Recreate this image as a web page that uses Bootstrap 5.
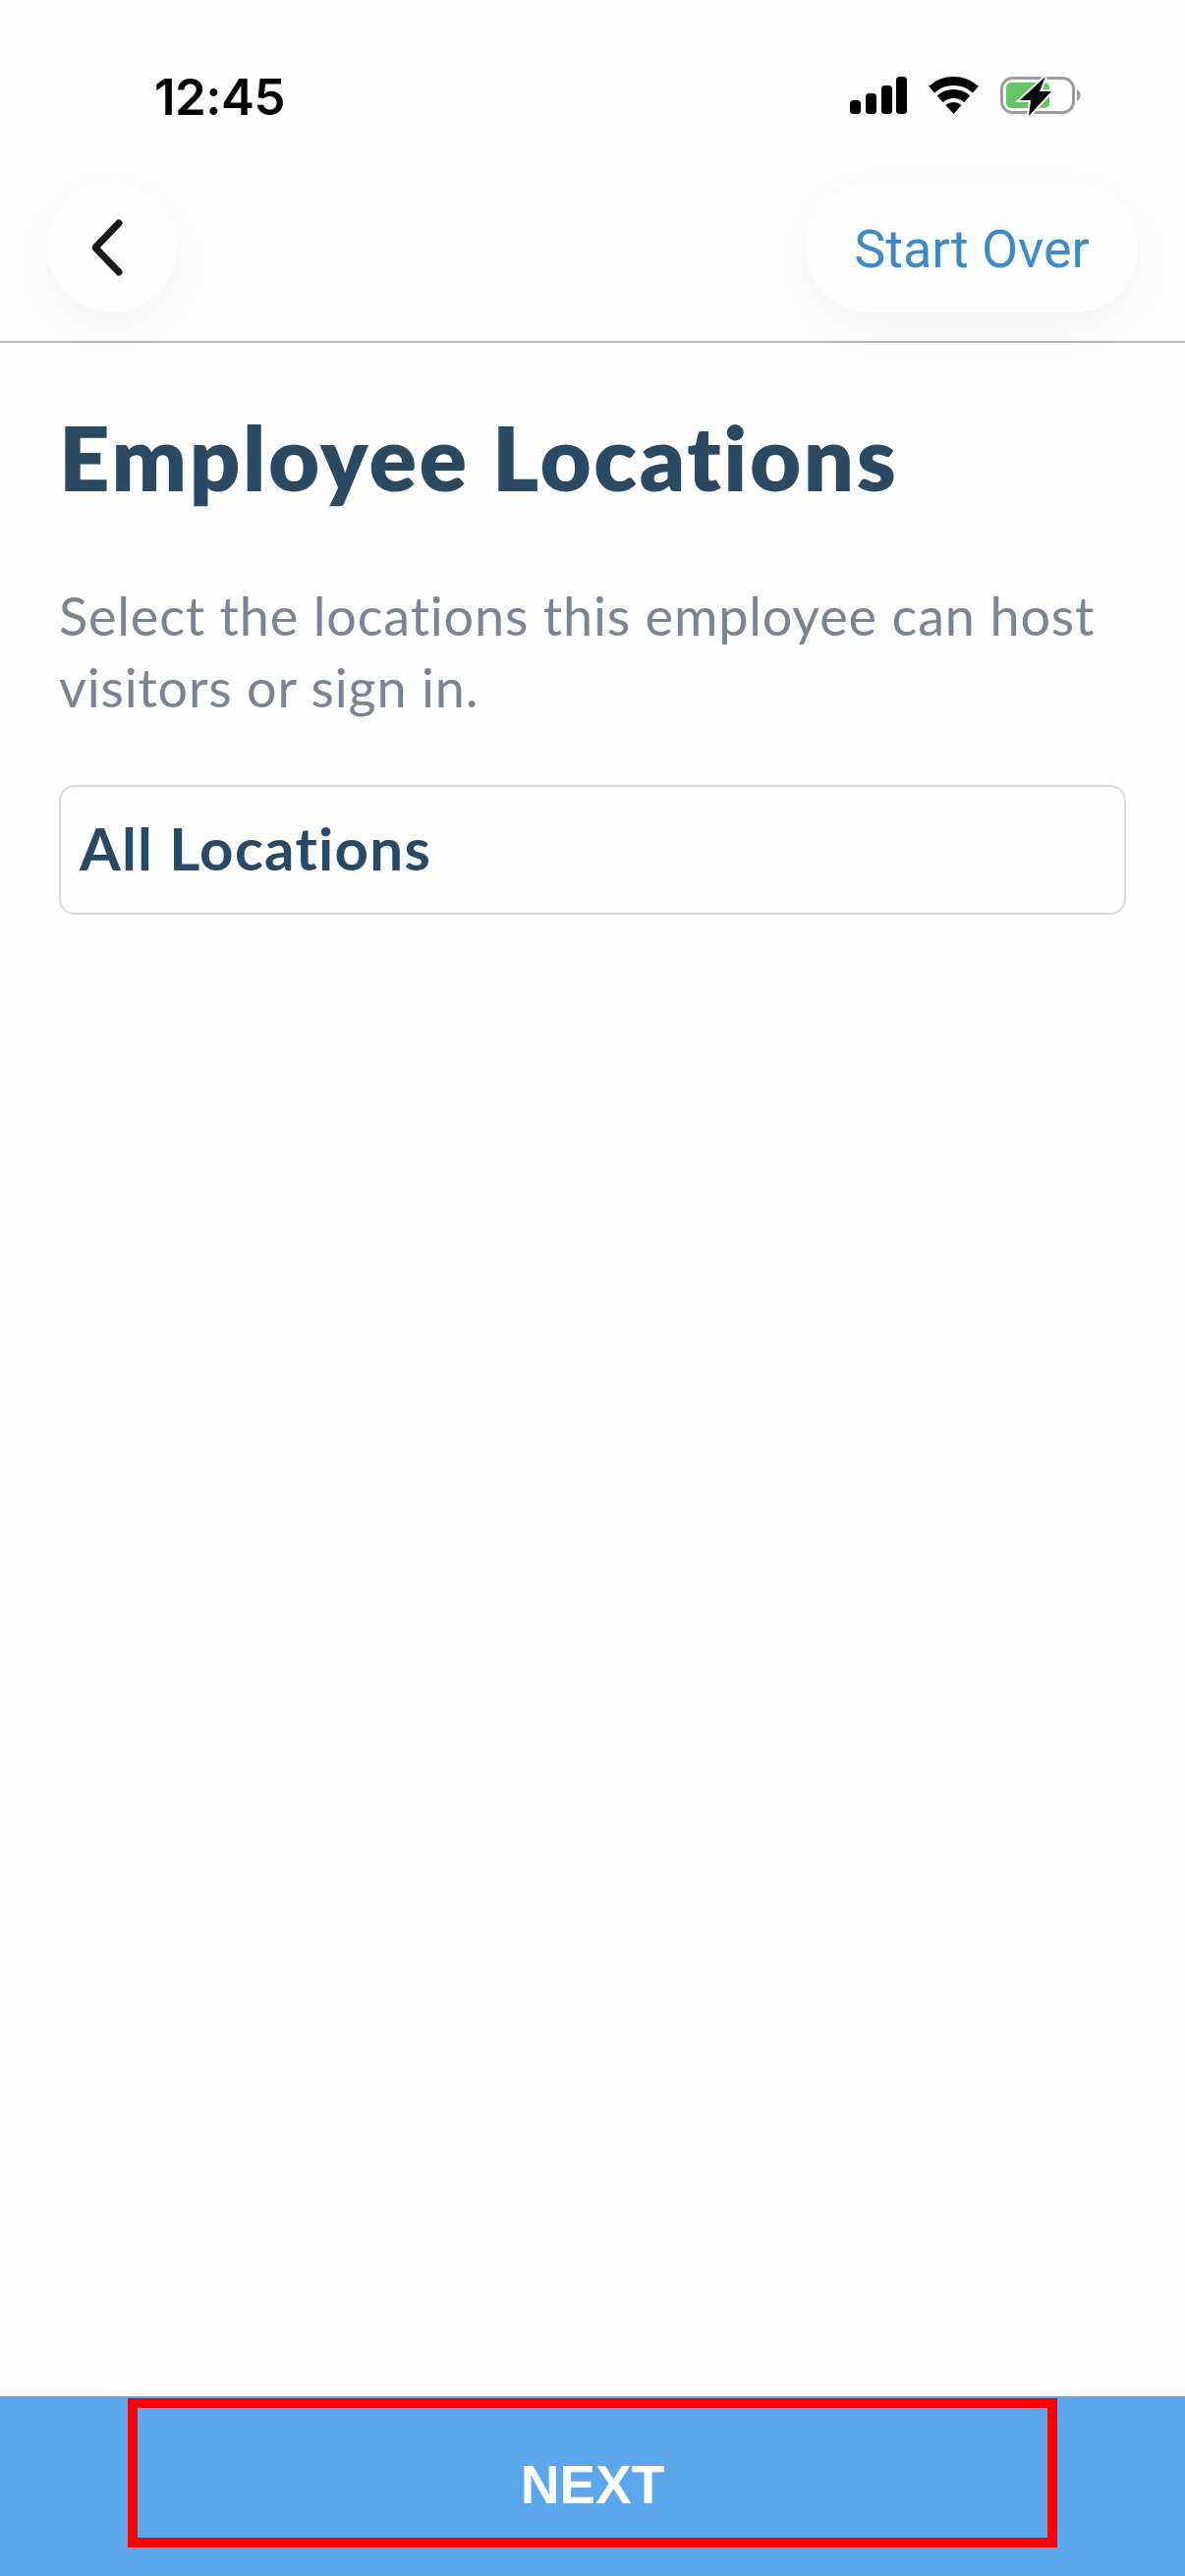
<!DOCTYPE html>
<html lang="en">
<head>
  <meta charset="UTF-8" />
  <meta name="viewport" content="width=device-width, initial-scale=1.0"/>
  <title>Employee Locations</title>

  <link href="https://cdn.jsdelivr.net/npm/bootstrap@5.3.0/dist/css/bootstrap.min.css" rel="stylesheet"/>

  <style>
    body {
      background-color: #fefefe;
      font-family: 'Lato', 'Liberation Sans', sans-serif;
      font-variant-ligatures: none;
      height: 2622px;
    }

    .status-row {
      height: 186px;
      padding: 70px 106px 0 157px;
      align-items: flex-start;
    }

    .status-icons {
      gap: 22px;
    }

    .clock {
      font-family: 'Inter', sans-serif;
      font-weight: 600;
      font-size: 51px;
      line-height: 58px;
      color: #000;
      letter-spacing: -0.5px;
    }

    .top-row {
      height: 163px;
      padding: 0 48px 30px;
      border-bottom: 2px solid #b9b9b9;
    }

    .round-btn {
      height: 132px;
      background-color: #fefefe;
      border: 0;
      border-radius: 66px;
      box-shadow: 0 16px 60px rgba(0, 0, 0, 0.05);
    }

    .back-btn {
      width: 132px;
    }

    .over-btn {
      width: 338px;
      padding: 4px 0 0;
      color: #3e8ac6;
      font-family: 'Roboto', sans-serif;
      font-size: 54px;
    }

    .page-title {
      color: #2a4a63;
      font-weight: 800;
      font-size: 90px;
      line-height: 100px;
      letter-spacing: 2.6px;
      margin: 66px 0 0;
    }

    .page-body {
      padding: 0 60px;
    }

    .page-hint {
      color: #7c8493;
      font-size: 54px;
      line-height: 73px;
      letter-spacing: 0.82px;
      margin: 75px 0 0;
    }

    .loc-box {
      height: 132px;
      margin-top: 63px;
      padding: 0 19px 4px;
      color: #2a4a63;
      font-size: 60px;
      font-weight: 700;
      letter-spacing: 1.3px;
      border: 2px solid #d9d9d9;
      border-radius: 16px;
    }

    .next-bar {
      height: 183px;
      background-color: #5ca7ec;
      padding-top: 2px;
    }

    .next-btn {
      width: 946px;
      height: 152px;
      padding: 25px 0 0;
      background-color: transparent;
      color: #fff;
      font-family: 'Liberation Sans', sans-serif;
      font-size: 55px;
      font-weight: 700;
      border: 10px solid #ff0000;
      border-radius: 0;
    }
  </style>
</head>
<body class="d-flex flex-column">

  <div class="status-row d-flex justify-content-between">
    <div class="clock">12:45</div>
    <div class="d-flex status-icons">
      <svg width="58" height="38" viewBox="0 0 58 38" class="mt-2">
        <rect x="0" y="24" width="11" height="14" rx="3.5" fill="#000"/>
        <rect x="16" y="17" width="11" height="21" rx="3.5" fill="#000"/>
        <rect x="32" y="9" width="11" height="29" rx="3.5" fill="#000"/>
        <rect x="47" y="0" width="11" height="38" rx="3.5" fill="#000"/>
      </svg>
      <svg width="51" height="38" viewBox="0 0 51 38" class="mt-2">
        <path d="M3.1 13.1A33.5 33.5 0 0 1 47.9 13.1" fill="none" stroke="#000" stroke-width="9"/>
        <path d="M11.8 22.8A20.5 20.5 0 0 1 39.2 22.8" fill="none" stroke="#000" stroke-width="9"/>
        <path d="M17.5 29.1A12 12 0 0 1 33.5 29.1L25.5 38Z" fill="#000"/>
      </svg>
      <svg width="82" height="40" viewBox="0 0 82 40" class="mt-2">
        <rect x="1.5" y="1.5" width="73" height="35" rx="11" fill="none" stroke="#9b9b9b" stroke-width="3"/>
        <rect x="6" y="6" width="44" height="26" rx="5" fill="#65c466"/>
        <path d="M78 13c2.500 1 3.500 3.500 3.500 6s-1 5-3.500 6Z" fill="#9b9b9b"/>
        <path d="M46 0L20 24H31L29 40L52 15H40Z" fill="#000" stroke="#fefefe" stroke-width="4" paint-order="stroke"/>
      </svg>
    </div>
  </div>

  <div class="top-row d-flex justify-content-between align-items-center">
    <button class="round-btn back-btn d-flex align-items-center justify-content-center" type="button" aria-label="Back">
      <svg width="40" height="64" viewBox="0 0 40 64" class="back-icon">
        <path d="M27 7L3 32L27 57" fill="none" stroke="#1a1a1a" stroke-width="7" stroke-linecap="round" stroke-linejoin="round"/>
      </svg>
    </button>
    <button class="round-btn over-btn" type="button">Start Over</button>
  </div>

  <div class="page-body flex-grow-1">
    <h1 class="page-title">Employee Locations</h1>
    <p class="page-hint">Select the locations this employee can host visitors or sign in.</p>
    <div class="loc-box d-flex align-items-center">All Locations</div>
  </div>

  <div class="next-bar d-flex justify-content-center align-items-start">
    <button class="btn next-btn" type="button">NEXT</button>
  </div>

  <script src="https://cdn.jsdelivr.net/npm/bootstrap@5.3.0/dist/js/bootstrap.bundle.min.js"></script>
</body>
</html>
